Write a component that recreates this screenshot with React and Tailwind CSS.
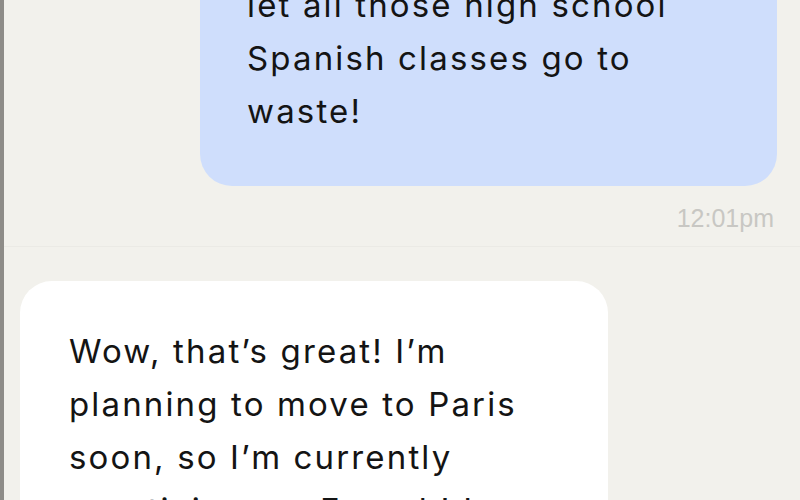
export default function App() {
  return (
    <div className="h-[500px] w-[800px] overflow-hidden bg-[#f2f1ec] border-l-4 border-[#8e8c88] flex flex-col">
      {/* Sent */}
      <div className="flex flex-col items-end pr-[23px] pb-[13px]">
        <div
          className="mt-[-63px] w-[577px] rounded-b-[32px] bg-[#cfdefc] pl-[47px] pt-[42px] pb-[48px] text-[33px] leading-[53px] tracking-[0.065em] text-[#141414]"
          style={{ fontFamily: 'Inter, "Noto Sans", sans-serif' }}
        >
          <p>let all those high school</p>
          <p>Spanish classes go to</p>
          <p>waste!</p>
        </div>
        <span
          className="mt-[17px] mr-[3px] text-[25px] leading-[30px] text-[#c8c7c3]"
          style={{ fontFamily: '"Liberation Sans", Arial, sans-serif' }}
        >
          12:01pm
        </span>
      </div>

      {/* Received */}
      <div className="flex-1 border-t border-[#ebeae5] pl-[16px] pt-[34px]">
        <div
          className="w-[588px] rounded-t-[32px] bg-white pl-[49px] pt-[44px] text-[33px] leading-[53px] tracking-[0.065em] text-[#141414]"
          style={{ fontFamily: 'Inter, "Noto Sans", sans-serif' }}
        >
          <p>Wow, that’s great! I’m</p>
          <p>planning to move to Paris</p>
          <p>soon, so I’m currently</p>
          <p>practicing my French! I</p>
        </div>
      </div>
    </div>
  );
}
